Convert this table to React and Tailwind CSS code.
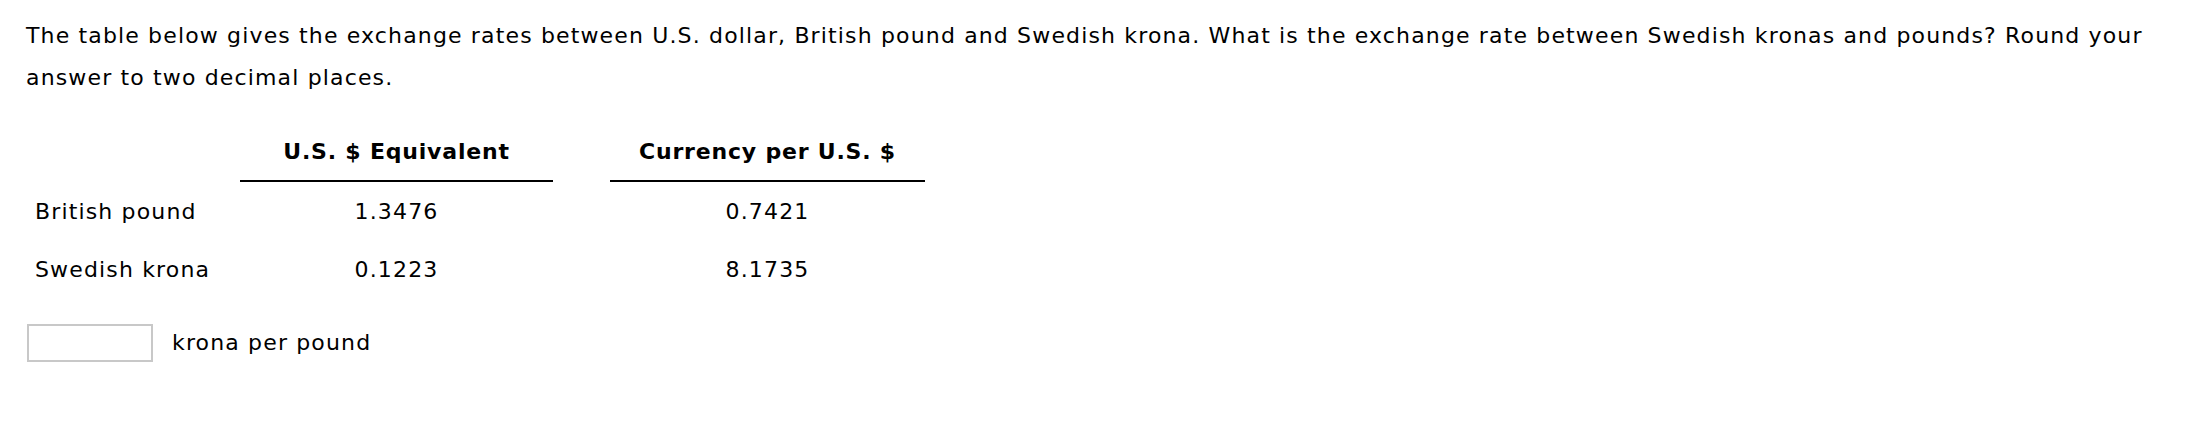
export default function App() {
  const rows = [
    { name: 'British pound', usd: '1.3476', per: '0.7421' },
    { name: 'Swedish krona', usd: '0.1223', per: '8.1735' },
  ];

  return (
    <div className="w-[2198px] h-[446px] bg-white text-black pl-[26px] pt-[15px] font-['DejaVu_Sans',Verdana,sans-serif] text-[22px] tracking-[1.15px]">
      <p className="leading-[42px] pr-[40px]">
        The table below gives the exchange rates between U.S. dollar, British pound and Swedish krona. What is the exchange rate between Swedish kronas and pounds? Round your answer to two decimal places.
      </p>

      <div className="mt-[32px] ml-[1px]">
        <div className="flex">
          <div className="w-[213px]" />
          <div className="w-[313px] border-b-2 border-black pb-[7px] text-center font-bold leading-[42px] tracking-[0.8px]">U.S. $ Equivalent</div>
          <div className="w-[57px]" />
          <div className="w-[315px] border-b-2 border-black pb-[7px] text-center font-bold leading-[42px] tracking-[0.8px]">Currency per U.S. $</div>
        </div>
        <div className="mt-[1px]">
          {rows.map((r) => (
            <div key={r.name} className="flex h-[58px] leading-[58px]">
              <div className="w-[213px] pl-[8px]">{r.name}</div>
              <div className="w-[313px] text-center">{r.usd}</div>
              <div className="w-[57px]" />
              <div className="w-[315px] text-center">{r.per}</div>
            </div>
          ))}
        </div>
      </div>

      <div className="mt-[23px] ml-[1px] flex items-center gap-[19px]">
        <input type="text" className="w-[126px] h-[38px] border-2 border-[#c8c8c8] bg-white outline-none" />
        <span className="leading-[42px]">krona per pound</span>
      </div>
    </div>
  );
}
